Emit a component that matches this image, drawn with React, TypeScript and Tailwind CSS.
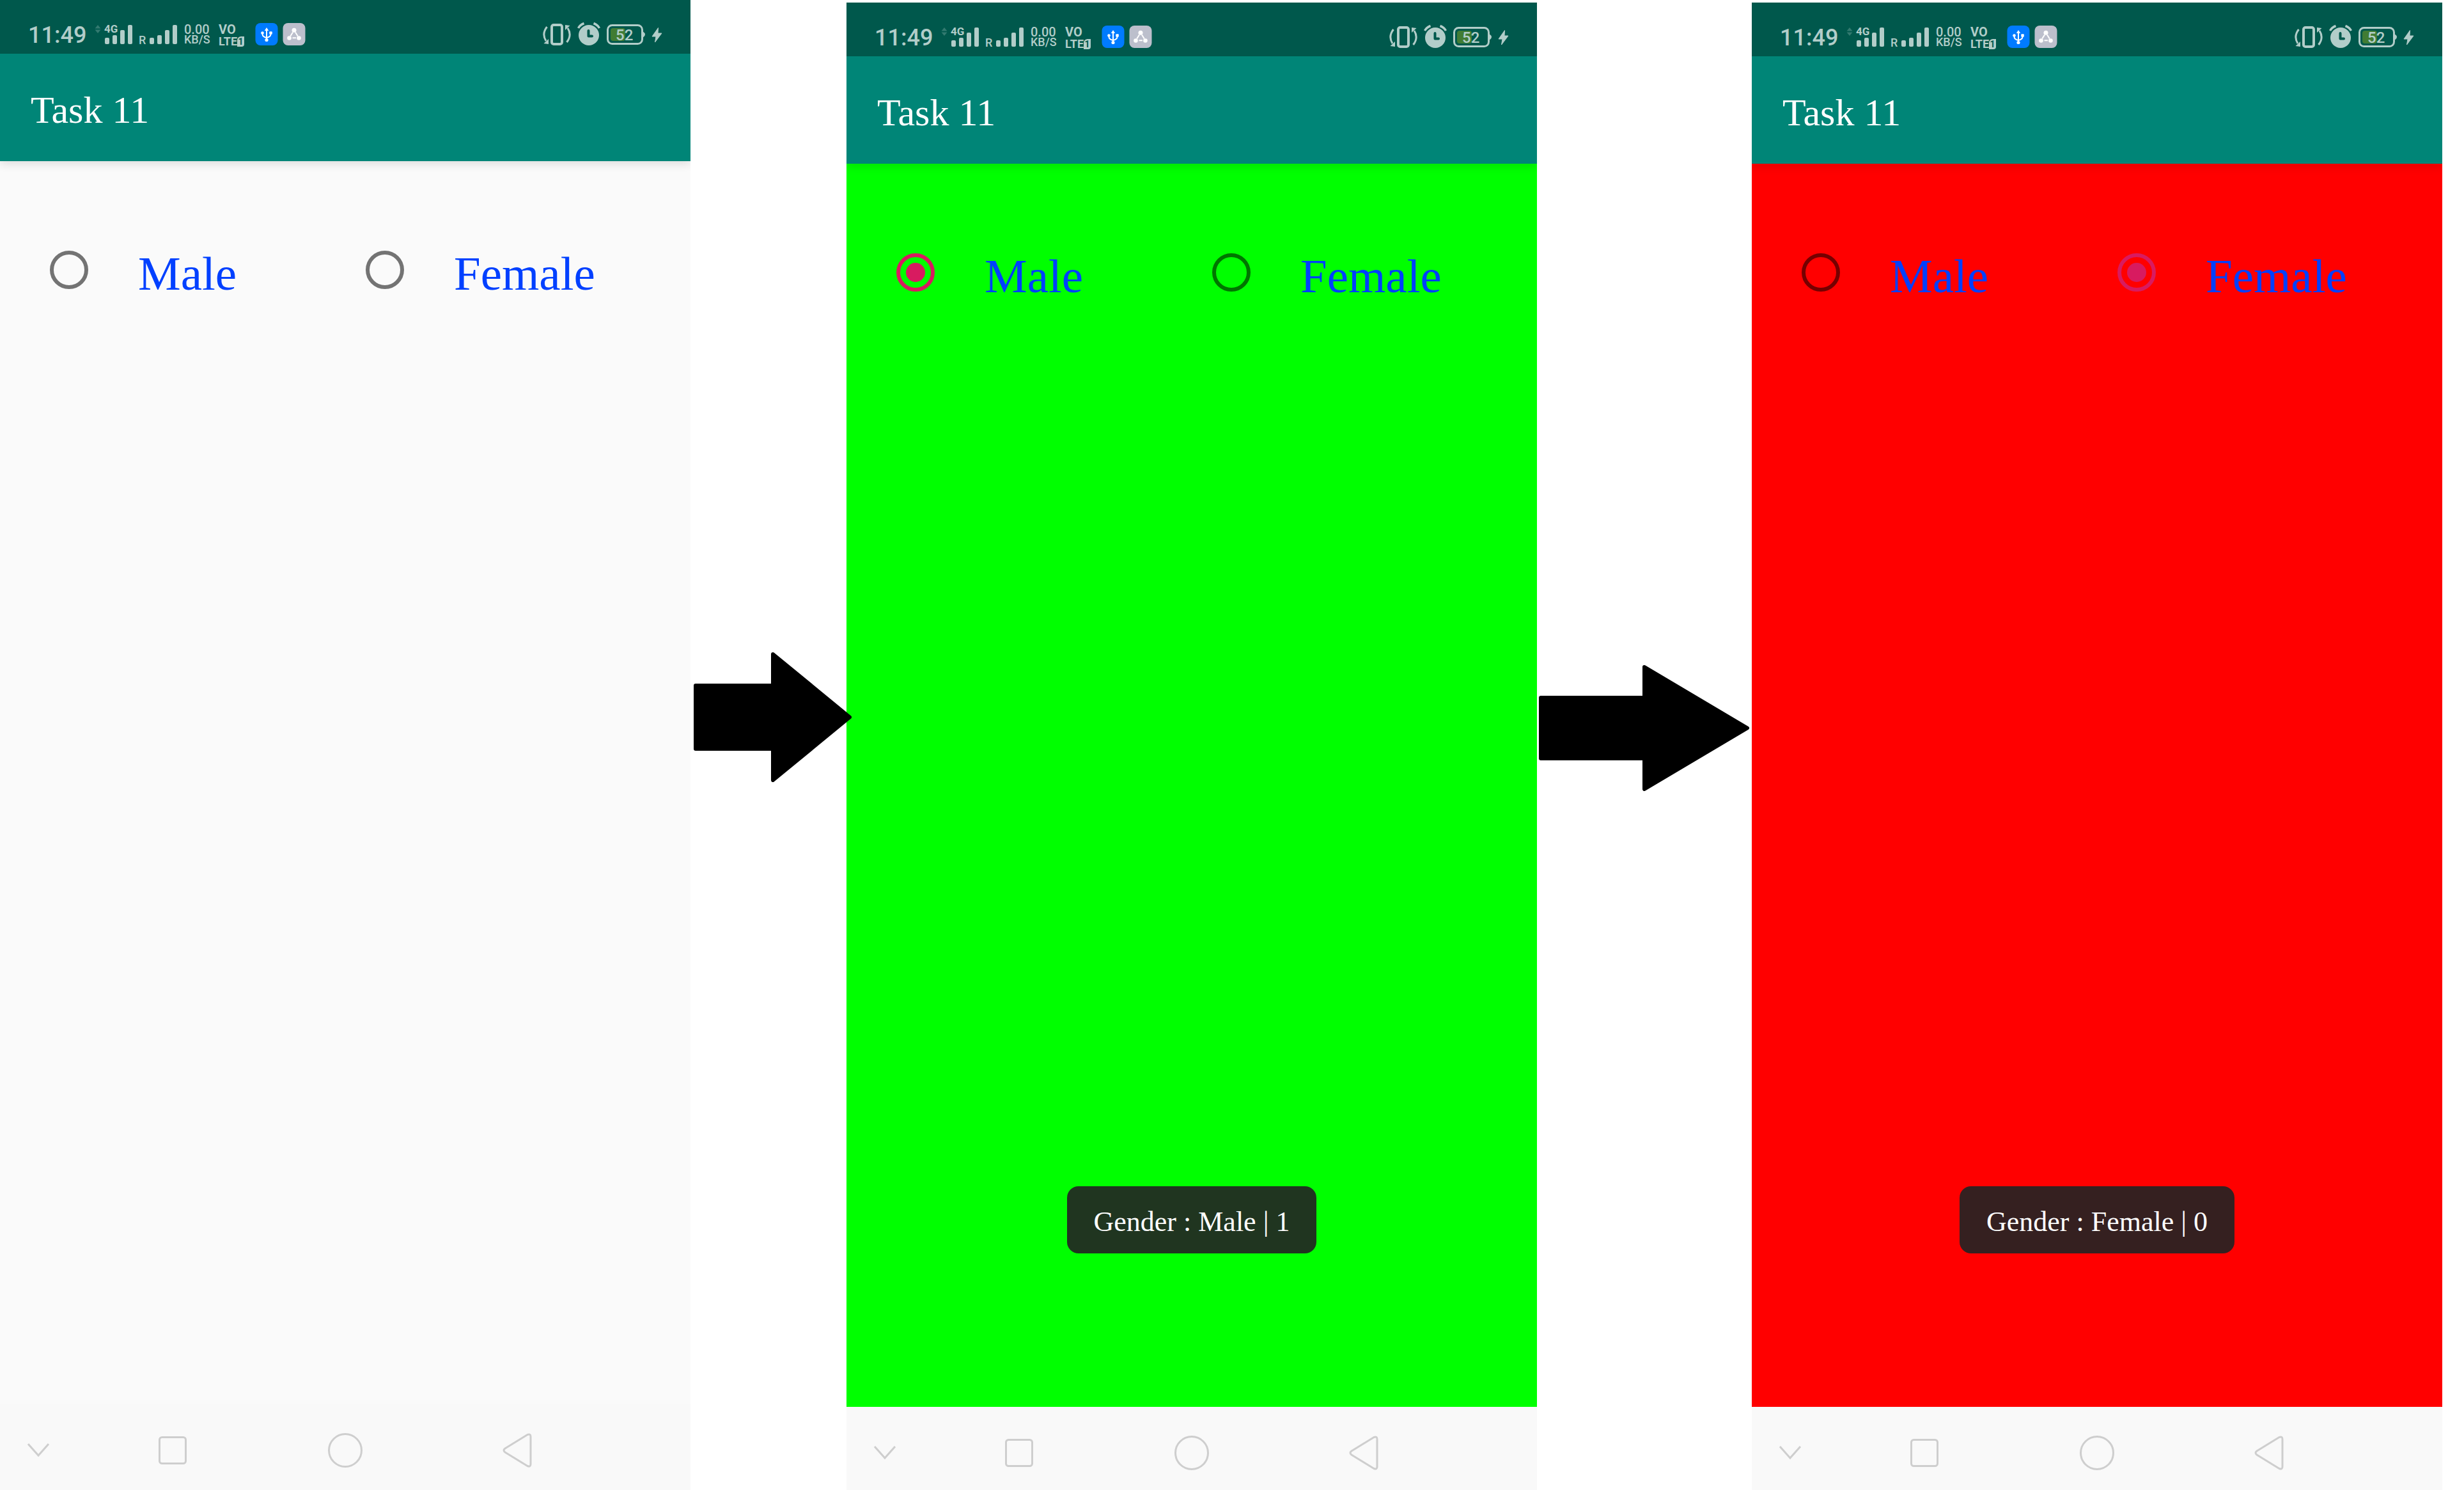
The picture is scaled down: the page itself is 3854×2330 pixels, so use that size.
import React from "react";

type Choice = "male" | "female" | null;

type ScreenProps = {
  id: string;
  selected: Choice;
  bodyClass: string;
  navClass: string;
  toast?: string;
  toastClass?: string;
};

function SignalIcon() {
  return (
    <svg className="ml-3.5 h-9 w-[130px] shrink-0 overflow-visible" viewBox="0 0 130 36" fill="#b2cdc9">
      <g fill="#337a70">
        <path d="M5 3l4.500 5.500h-9z" />
        <path d="M5 16l4.500-5.500h-9z" />
      </g>
      <text x="15" y="15" fontFamily="Roboto, sans-serif" fontWeight="700" fontSize="17">
        4G
      </text>
      <rect x="16" y="23" width="7" height="10" rx="2" />
      <rect x="28" y="19" width="7" height="14" rx="2" />
      <rect x="40" y="11" width="7" height="22" rx="2" />
      <rect x="52" y="3" width="7" height="30" rx="2" />
      <text x="69" y="33" fontFamily="Roboto, sans-serif" fontWeight="500" fontSize="18">
        R
      </text>
      <rect x="86" y="23" width="7" height="10" rx="2" />
      <rect x="98" y="19" width="7" height="14" rx="2" />
      <rect x="110" y="11" width="7" height="22" rx="2" />
      <rect x="122" y="3" width="7" height="30" rx="2" />
    </svg>
  );
}

function UsbIcon() {
  return (
    <svg className="ml-3.5 size-9 shrink-0" viewBox="0 0 36 36">
      <rect x="0.500" width="35" height="35" rx="8" fill="#007bff" />
      <g fill="none" stroke="#fff" strokeWidth="2">
        <path d="M18 11v15" />
        <path d="M11.500 16v1.500c0 3 2.500 4.500 6.500 5.500c4-1 6.500-2.500 6.500-5.500V16" />
      </g>
      <g fill="#fff">
        <path d="M18 7l3.200 5h-6.400z" />
        <circle cx="11.500" cy="15.500" r="2.300" />
        <rect x="22.300" y="13.300" width="4.500" height="4.500" rx="1" />
        <circle cx="18" cy="26.500" r="2.600" />
      </g>
    </svg>
  );
}

function ShareIcon() {
  return (
    <svg className="ml-[7px] size-9 shrink-0" viewBox="0 0 36 36">
      <rect x="0.500" width="35" height="35" rx="8" fill="#bcbfcc" />
      <g fill="#fff">
        <circle cx="18" cy="11.300" r="3.500" />
        <circle cx="10.500" cy="23.500" r="3.300" />
        <circle cx="25.500" cy="23.500" r="3.300" />
      </g>
      <path d="M16 14.500l-3.800 6M20 14.500l3.800 6M15.500 23.300h5.500" stroke="#fff" strokeWidth="2" />
    </svg>
  );
}

function VibrateIcon() {
  return (
    <svg className="h-9 w-11" viewBox="0 0 44 36" fill="none" stroke="#b2cdc9">
      <rect x="14" y="3" width="16" height="30" rx="3" strokeWidth="4" />
      <path d="M6.500 6Q-2 17 5 28" strokeWidth="3" />
      <path d="M37.500 30Q46 19 39 8" strokeWidth="3" />
      <path d="M1.500 32l7.500 1v-8z" fill="#b2cdc9" stroke="none" />
      <path d="M42.500 4l-7.500-1v8z" fill="#b2cdc9" stroke="none" />
    </svg>
  );
}

function AlarmIcon() {
  return (
    <svg className="size-9 overflow-visible" viewBox="0 0 36 36" fill="none">
      <circle cx="18" cy="19" r="16" fill="#b2cdc9" />
      <path d="M1.500 8Q4 3 10.500 0.500M34.500 8Q32 3 25.500 0.500" stroke="#b2cdc9" strokeWidth="3.500" />
      <path d="M17.500 12v8.500h5.500" stroke="#00584c" strokeWidth="4" strokeLinecap="round" strokeLinejoin="round" />
    </svg>
  );
}

function BatteryIcon() {
  return (
    <svg className="h-9 w-[60px]" viewBox="0 0 60 36">
      <rect x="1.500" y="3.500" width="54" height="29" rx="7" fill="none" stroke="#b2cdc9" strokeWidth="3" />
      <path d="M57 13.500q3 2 3 4.500t-3 4.500z" fill="#b2cdc9" />
      <rect x="6" y="8" width="23" height="20" rx="4" fill="#417c34" />
      <text x="14" y="27" fontFamily="Roboto, sans-serif" fontWeight="500" fontSize="24" fill="#b2cdc9">
        52
      </text>
    </svg>
  );
}

function BoltIcon() {
  return (
    <svg className="h-9 w-[17px]" viewBox="0 0 17 36" fill="#b2cdc9" stroke="#b2cdc9" strokeLinejoin="round">
      <path d="M10.500 7.500L1 21h6l-1.500 9L16 16h-6z" />
    </svg>
  );
}

function StatusBar() {
  return (
    <div className="flex h-[84px] items-start justify-between bg-[#00584c] pt-9 pr-11 pl-11 font-[Roboto,sans-serif] font-medium text-[#b2cdc9]">
      <div className="flex items-start">
        <span className="w-[90px] text-[36px] leading-[38px]">11:49</span>
        <SignalIcon />
        <div className="ml-2.5 flex w-[42px] flex-col pt-0.5 text-[20px] leading-4">
          <span>0.00</span>
          <span className="text-[18px]">KB/S</span>
        </div>
        <div className="ml-3 flex w-[43px] flex-col gap-[3px] pt-0.5 text-[20px] leading-4 font-bold">
          <span>VO</span>
          <span className="flex text-[18px]">
            LTE
            <span className="h-4 w-[11px] shrink-0 rounded-tl-md rounded-br-sm bg-[#b2cdc9] text-center text-[14px] text-[#00584c]">
              1
            </span>
          </span>
        </div>
        <UsbIcon />
        <ShareIcon />
      </div>
      <div className="flex items-start gap-2.5">
        <VibrateIcon />
        <AlarmIcon />
        <BatteryIcon />
        <BoltIcon />
      </div>
    </div>
  );
}

function RadioOption({ group, value, label, checked }: { group: string; value: string; label: string; checked: boolean }) {
  return (
    <label className="flex w-[494px] items-start gap-[78px]">
      <input
        type="radio"
        name={group}
        value={value}
        defaultChecked={checked}
        className="flex size-[60px] shrink-0 appearance-none items-center justify-center rounded-full border-[6px] border-black/54 checked:border-[#d81b60] checked:before:size-[30px] checked:before:rounded-full checked:before:bg-[#d81b60]"
      />
      <span className="pt-1.5 text-[75px] leading-[60px] text-[#0040ff]">{label}</span>
    </label>
  );
}

function NavBar({ className }: { className: string }) {
  return (
    <nav className={"grid grid-cols-8 bg-[#f9f9f9] pt-11 " + className}>
      <button type="button" aria-label="Hide" className="flex pl-8">
        <svg className="size-14" viewBox="0 0 56 56" fill="none" stroke="#cecece" strokeWidth="3">
          <path d="M12 18l16 18l16-18" />
        </svg>
      </button>
      <button type="button" aria-label="Recent apps" className="col-span-2 flex justify-center">
        <svg className="size-14" viewBox="0 0 56 56" fill="none" stroke="#cecece" strokeWidth="3">
          <rect x="7.500" y="7.500" width="41" height="41" rx="4" />
        </svg>
      </button>
      <button type="button" aria-label="Home" className="col-span-2 flex justify-center">
        <svg className="size-14" viewBox="0 0 56 56" fill="none" stroke="#cecece" strokeWidth="3">
          <circle cx="28" cy="28" r="25.500" />
        </svg>
      </button>
      <button type="button" aria-label="Back" className="col-span-2 flex justify-center">
        <svg className="size-14" viewBox="0 0 56 56" fill="none" stroke="#cecece" strokeWidth="3" strokeLinejoin="round">
          <path d="M43 3.500q5-2 5 3v43q0 5-5 3L8 31q-4-3 0-6z" />
        </svg>
      </button>
    </nav>
  );
}

function PhoneScreen({ id, selected, bodyClass, navClass, toast, toastClass }: ScreenProps) {
  return (
    <section className="flex min-w-0 flex-col">
      <StatusBar />
      <header className="relative z-10 flex h-[168px] items-center bg-[#008577] pt-2 pl-12 shadow-[0_4px_14px_rgba(0,0,0,0.12)] [clip-path:inset(0_0_-24px_0)]">
        <h1 className="text-[60px] leading-none text-white">Task 11</h1>
      </header>
      <div className={"relative flex-1 pt-[140px] pl-[78px] " + bodyClass}>
        <div role="radiogroup" aria-label="Gender" className="flex">
          <RadioOption group={id} value="male" label="Male" checked={selected === "male"} />
          <RadioOption group={id} value="female" label="Female" checked={selected === "female"} />
        </div>
        {toast && (
          <div role="status" className="absolute inset-x-0 bottom-60 flex justify-center">
            <p className={"rounded-[18px] px-[42px] pt-8 pb-[25px] text-[44px] leading-[48px] text-white " + toastClass}>
              {toast}
            </p>
          </div>
        )}
      </div>
      <NavBar className={navClass} />
    </section>
  );
}

export default function App() {
  return (
    <main className="grid min-h-screen grid-cols-[1080fr_244fr_1080fr_336fr_1080fr_34fr] overflow-hidden bg-white font-['Liberation_Serif',serif]">
      <PhoneScreen id="gender-none" selected={null} bodyClass="bg-[#fafafa]" navClass="pb-[34px]" />
      <div className="relative z-20 flex min-w-0 items-start pt-[1020px] pl-[5px]">
        <svg className="h-[203px] w-[247px] shrink-0" viewBox="0 0 247 203" stroke="#000" strokeWidth="6" strokeLinejoin="round">
          <path d="M3 52h121V3l120 98.500L124 200v-49H3z" />
        </svg>
      </div>
      <div className="grid min-w-0 pt-1">
        <PhoneScreen
          id="gender-male"
          selected="male"
          bodyClass="bg-[#00ff00]"
          navClass="pb-[30px]"
          toast="Gender : Male | 1"
          toastClass="bg-[#203520]"
        />
      </div>
      <div className="flex min-w-0 items-start pt-[1040px] pl-[3px]">
        <svg className="h-[197px] w-[329px] shrink-0" viewBox="0 0 329 197" stroke="#000" strokeWidth="6" strokeLinejoin="round">
          <path d="M3 51h162V3l161 95.500L165 194v-48H3z" />
        </svg>
      </div>
      <div className="grid min-w-0 pt-1">
        <PhoneScreen
          id="gender-female"
          selected="female"
          bodyClass="bg-[#ff0000]"
          navClass="pb-[30px]"
          toast="Gender : Female | 0"
          toastClass="bg-[#352020]"
        />
      </div>
    </main>
  );
}
